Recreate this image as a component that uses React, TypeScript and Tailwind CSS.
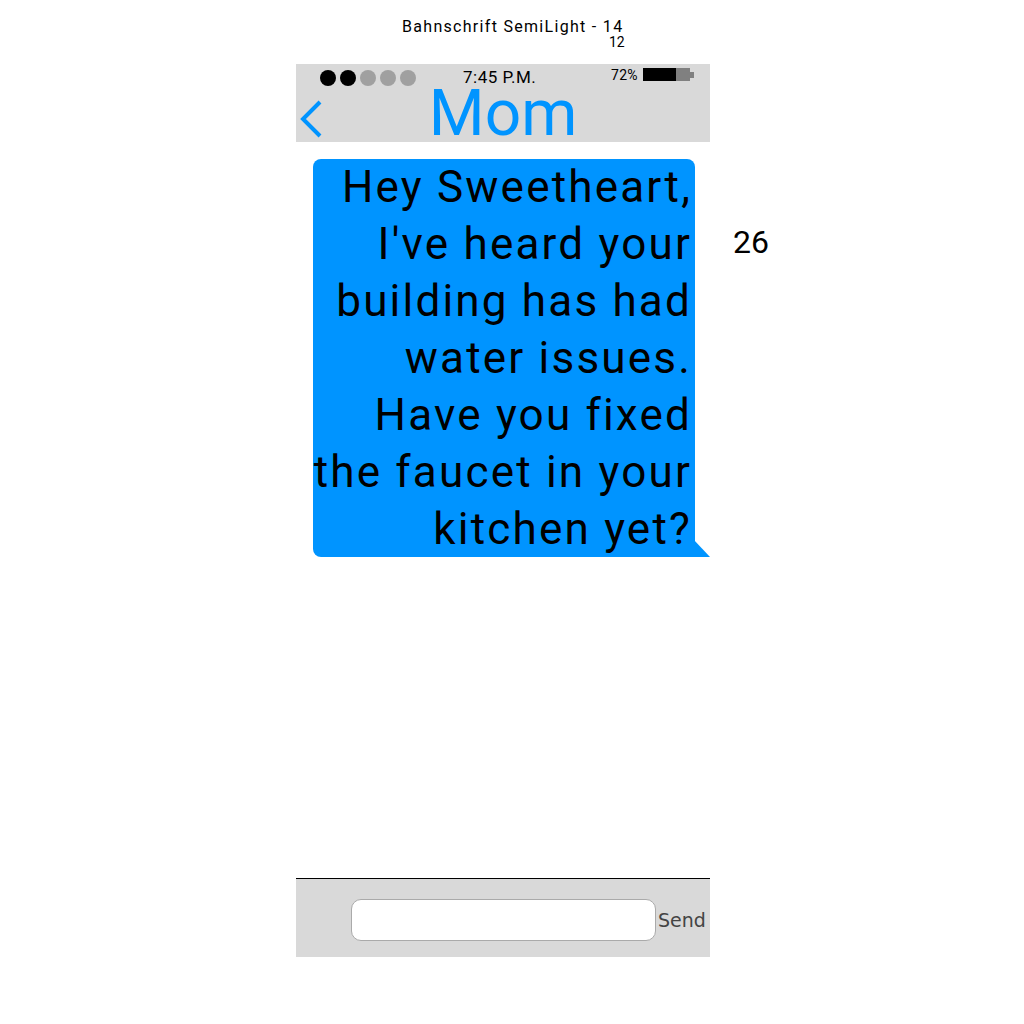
import React from "react";

const lines = [
  "Hey Sweetheart,",
  "I've heard your",
  "building has had",
  "water issues.",
  "Have you fixed",
  "the faucet in your",
  "kitchen yet?",
];

export default function App() {
  return (
    <div className="w-[1024px] h-[1024px] bg-white relative" style={{ fontFamily: "Roboto, 'DejaVu Sans', sans-serif" }}>
      <div className="h-[64px] relative">
        <div className="absolute left-[402px] top-[17px] text-[16px] leading-[20px] tracking-[1.3px] text-black">Bahnschrift SemiLight - 14</div>
        <div className="absolute left-[609px] top-[35px] text-[14px] leading-[15px] text-black">12</div>
      </div>
      <div className="ml-[296px] w-[414px] h-[893px] flex flex-col">
        <div className="h-[78px] bg-[#d9d9d9] relative">
          <div className="absolute left-[24px] top-[6px] flex gap-[4px]">
            <div className="w-[16px] h-[16px] rounded-full bg-black" />
            <div className="w-[16px] h-[16px] rounded-full bg-black" />
            <div className="w-[16px] h-[16px] rounded-full bg-[#a0a0a0]" />
            <div className="w-[16px] h-[16px] rounded-full bg-[#a0a0a0]" />
            <div className="w-[16px] h-[16px] rounded-full bg-[#a0a0a0]" />
          </div>
          <div className="absolute left-[167px] top-[3px] text-[17px] leading-[20px] tracking-[0.5px] text-black">7:45 P.M.</div>
          <div className="absolute left-[315px] top-[2px] text-[14px] leading-[18px] tracking-[0.3px] text-black">72%</div>
          <div className="absolute left-[347px] top-[4px] flex items-center">
            <div className="w-[33px] h-[13px] bg-black" />
            <div className="w-[14px] h-[13px] bg-[#808080]" />
            <div className="w-[4px] h-[6px] bg-[#808080]" />
          </div>
          <svg className="absolute left-[3px] top-[36px]" width="24" height="38" viewBox="0 0 24 38">
            <path d="M21 2 L4 19 L21 36" fill="none" stroke="#0094ff" strokeWidth="4" />
          </svg>
          <div className="absolute left-0 right-0 top-[24px] text-center text-[#0094ff] text-[64px] leading-[52px]">Mom</div>
        </div>
        <div className="flex-1 relative">
          <div className="absolute left-[17px] top-[17px] w-[382px] h-[398px] bg-[#0094ff] rounded-[8px] rounded-br-none pr-[3px] text-right text-black text-[44px] leading-[57px] tracking-[2.2px]">
            {lines.map((l, i) => (
              <div key={i} className="whitespace-nowrap">{l}</div>
            ))}
          </div>
          <svg className="absolute left-[398px] top-[398px]" width="16" height="17" viewBox="0 0 16 17">
            <polygon points="0,0 16,17 0,17" fill="#0094ff" />
          </svg>
        </div>
        <div className="h-[79px] border-t border-black bg-[#d9d9d9] flex items-center pt-[4px]">
          <div className="ml-[55px] w-[305px] h-[42px] bg-white border border-[#aaaaaa] rounded-[10px]" />
          <div className="ml-[2px] text-[19px] text-[#444444]" style={{ fontFamily: "'DejaVu Sans', sans-serif" }}>Send</div>
        </div>
      </div>
      <div className="absolute left-[733px] top-[222px] text-[32px] leading-[40px] text-black">26</div>
    </div>
  );
}
